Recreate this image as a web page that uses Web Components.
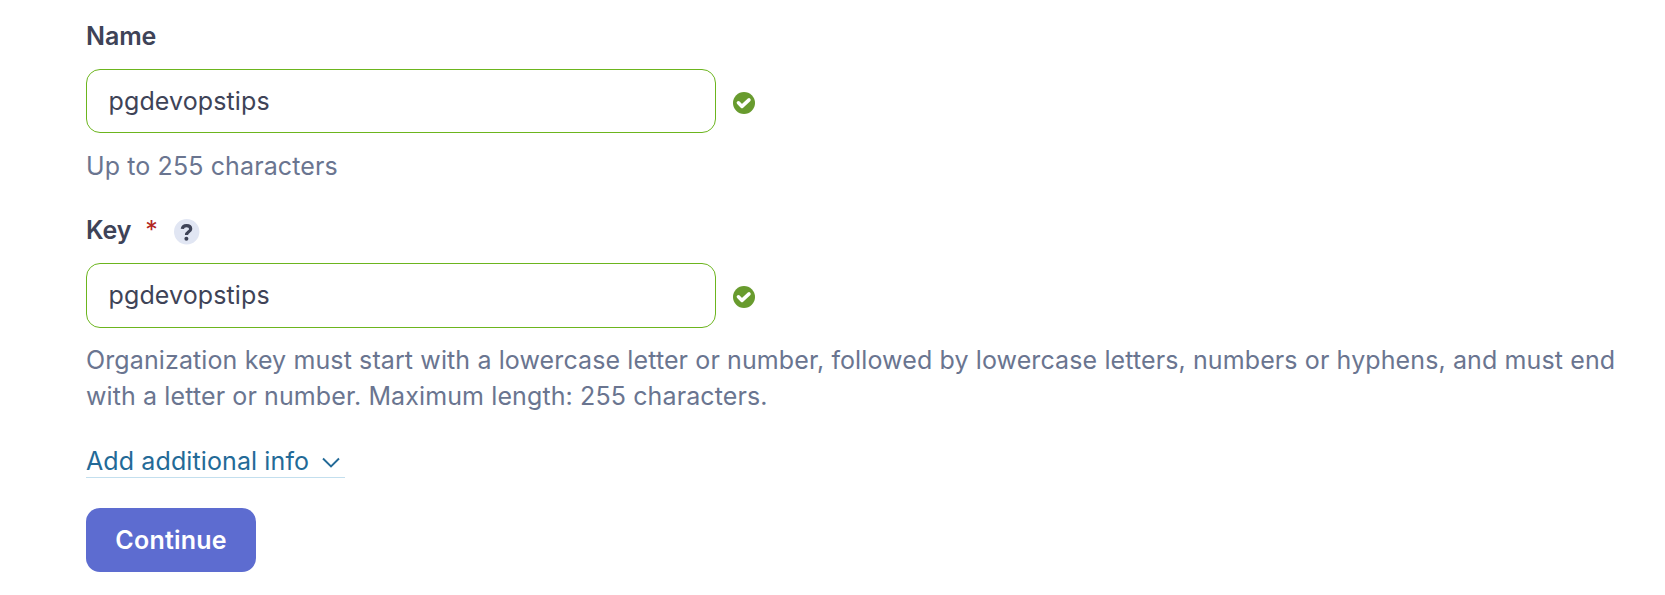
<!DOCTYPE html>
<html lang="en"><head><meta charset="utf-8"><style>
body{margin:0;background:#fff;font-family:Inter,"Liberation Sans",sans-serif}
</style></head><body>
<org-form></org-form>
<script>
const define=(name,html)=>customElements.define(name,class extends HTMLElement{
 constructor(){super();this.attachShadow({mode:'open'}).innerHTML=html;}
});
define('valid-icon',`<style>:host{display:block;width:22px;height:22px}svg{display:block}</style>
<svg width="22" height="22" viewBox="0 0 22 22"><circle cx="11" cy="11" r="11" fill="#689b2e"/><path d="M5.400 10.800 9 14.400 16 7.900" fill="none" stroke="#fff" stroke-width="3.500" stroke-linecap="round" stroke-linejoin="round"/></svg>`);
define('help-icon',`<style>:host{display:block;width:26px;height:26px}svg{display:block}</style>
<svg width="26" height="26" viewBox="0 0 26 26"><circle cx="12.700" cy="12.700" r="12.700" fill="#e1e6f3"/><path d="M8.300 9.900C8.600 7.700 10.200 6.600 12.500 6.600c2.500 0 4.200 1.300 4.200 3.300 0 2.900-4.200 2.800-4.200 6" fill="none" stroke="#3e4357" stroke-width="3.200"/><circle cx="12.400" cy="19.700" r="2" fill="#3e4357"/></svg>`);
define('form-field',`<style>
:host{display:block}.label{display:flex;align-items:center;height:36px;font-weight:600;font-size:25px;line-height:36px;color:#3e4357;letter-spacing:-.1px}
.row{display:flex;align-items:flex-start;gap:17px;margin-top:15px}
.box{box-sizing:border-box;width:630px;height:var(--box-height,64px);border:1px solid #6cb51e;border-radius:14px;padding:0 21.500px;font-size:25px;line-height:62px;color:#3e4357;letter-spacing:.12px}
valid-icon{margin-top:23px}
.hint{margin-top:var(--hint-gap,15px);font-size:25px;line-height:36px;color:#6a7590;letter-spacing:.113px}</style>
<div class="label"><slot name="label"></slot></div><div class="row"><div class="box"><slot name="value"></slot></div><valid-icon></valid-icon></div><div class="hint"><slot></slot></div>`);
define('info-link',`<style>:host{display:flex;align-items:center;gap:13px;width:259px;height:34px;border-bottom:1px solid #c3dfee;box-sizing:border-box;color:#236a97;font-size:25px;line-height:34px;letter-spacing:.11px;white-space:nowrap}svg{margin-top:3px}</style><span><slot></slot></span><svg width="18" height="11" viewBox="0 0 18 11"><path d="M1 1.500 9 9.500 17 1.500" fill="none" stroke="#236a97" stroke-width="1.900"/></svg>`);
define('primary-button',`<style>:host{display:flex;align-items:center;justify-content:center;width:170px;height:64px;border-radius:14px;background:#5d6cd0;color:#fff;font-weight:600;font-size:25px;letter-spacing:.2px}</style><slot></slot>`);
define('org-form',`<style>:host{display:block;padding:18px 0 0 86px}
.key{margin-top:28px;--box-height:65px;--hint-gap:14px}.star{color:#b3261e;font-weight:400;margin-left:14px}help-icon{margin:4px 0 0 16px}info-link{margin-top:30px}primary-button{margin-top:30px}</style>
<form-field><span slot="label">Name</span><span slot="value">pgdevopstips</span>Up to 255 characters</form-field>
<form-field class="key"><span slot="label">Key</span><span slot="label" class="star">*</span><help-icon slot="label"></help-icon><span slot="value">pgdevopstips</span>Organization key must start with a lowercase letter or number, followed by lowercase letters, numbers or hyphens, and must end<br>with a letter or number. Maximum length: 255 characters.</form-field>
<info-link>Add additional info</info-link><primary-button>Continue</primary-button>`);
</script></body></html>
